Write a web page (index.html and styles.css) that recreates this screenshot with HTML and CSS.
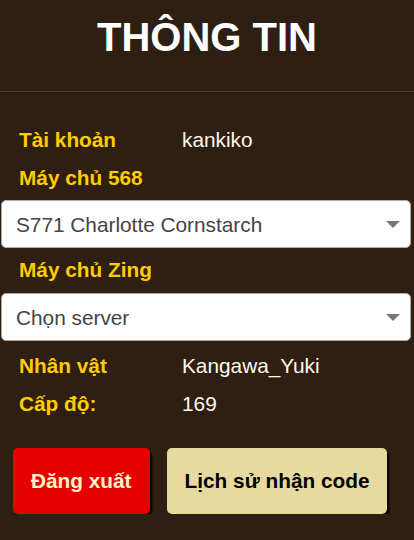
FILE: index.html
```html
<!DOCTYPE html>
<html lang="vi">
<head>
  <meta charset="UTF-8" />
  <meta name="viewport" content="width=device-width, initial-scale=1.0"/>
  <title>Thông tin tài khoản</title>
  <link rel="stylesheet" href="styles.css">
</head>
<body>
  <header>
    <h1>THÔNG TIN</h1>
  </header>

  <div class="info">
    <div class="row">
      <span class="label">Tài khoản</span>
      <span class="value">kankiko</span>
    </div>

    <div class="row">
      <span class="label">Máy chủ 568</span>
    </div>
    <div class="select-wrap">
      <select class="server">
        <option>S771 Charlotte Cornstarch</option>
      </select>
      <span class="arrow"></span>
    </div>

    <div class="row">
      <span class="label">Máy chủ Zing</span>
    </div>
    <div class="select-wrap zing">
      <select class="server">
        <option>Chọn server</option>
      </select>
      <span class="arrow"></span>
    </div>

    <div class="character">
      <div class="row">
        <span class="label">Nhân vật</span>
        <span class="value">Kangawa_Yuki</span>
      </div>
      <div class="row">
        <span class="label">Cấp độ:</span>
        <span class="value">169</span>
      </div>
    </div>
  </div>

  <div class="actions">
    <button class="btn logout">Đăng xuất</button>
    <button class="btn history">Lịch sử nhận code</button>
  </div>
</body>
</html>
```

FILE: styles.css
```css
body {
  margin: 0;
  font-family: "Liberation Sans", Arial, sans-serif;
  background: #2e1f12;
  color: #fff;
}
header {
  padding: 14px 0 31px;
  border-bottom: 1px solid #4a3a2a;
}
header h1 {
  margin: 0;
  text-align: center;
  font-size: 40px;
  line-height: 46px;
  color: #fff;
}
.info {
  padding-top: 29px;
}
.row {
  display: grid;
  grid-template-columns: 163px 1fr;
  padding-left: 19px;
  height: 38px;
  line-height: 38px;
  font-size: 20.8px;
}
.label {
  color: #ffcc00;
  font-weight: bold;
  white-space: nowrap;
}
.value {
  color: #fff8ec;
}
.select-wrap {
  position: relative;
  margin: 3px 3px 3px 1px;
}
.select-wrap + .row {
  margin-top: 1px;
}
.select-wrap.zing {
  margin-top: 4px;
}
.character {
  margin-top: 6px;
}
.server {
  display: block;
  width: 100%;
  height: 48px;
  -webkit-appearance: none;
  appearance: none;
  background: #fff;
  border: 1px solid #aaa;
  border-radius: 5px;
  padding: 0 40px 0 14px;
  font-family: "Liberation Sans", Arial, sans-serif;
  font-size: 20.8px;
  color: #444;
  outline: none;
}
.arrow {
  position: absolute;
  right: 11px;
  top: 21px;
  width: 0;
  height: 0;
  border-left: 7px solid transparent;
  border-right: 7px solid transparent;
  border-top: 7px solid #777;
}
.actions {
  display: flex;
  gap: 17px;
  padding: 25px 0 0 13px;
}
.btn {
  height: 66px;
  padding: 0 18px;
  border: none;
  border-radius: 5px;
  font-family: "Liberation Sans", Arial, sans-serif;
  font-size: 20.8px;
  font-weight: bold;
  box-shadow: 2px 3px 2px #000;
  cursor: pointer;
}
.logout {
  background: #e60000;
  color: #fff3cc;
}
.history {
  background: #e8d9a0;
  color: #000;
}
```
